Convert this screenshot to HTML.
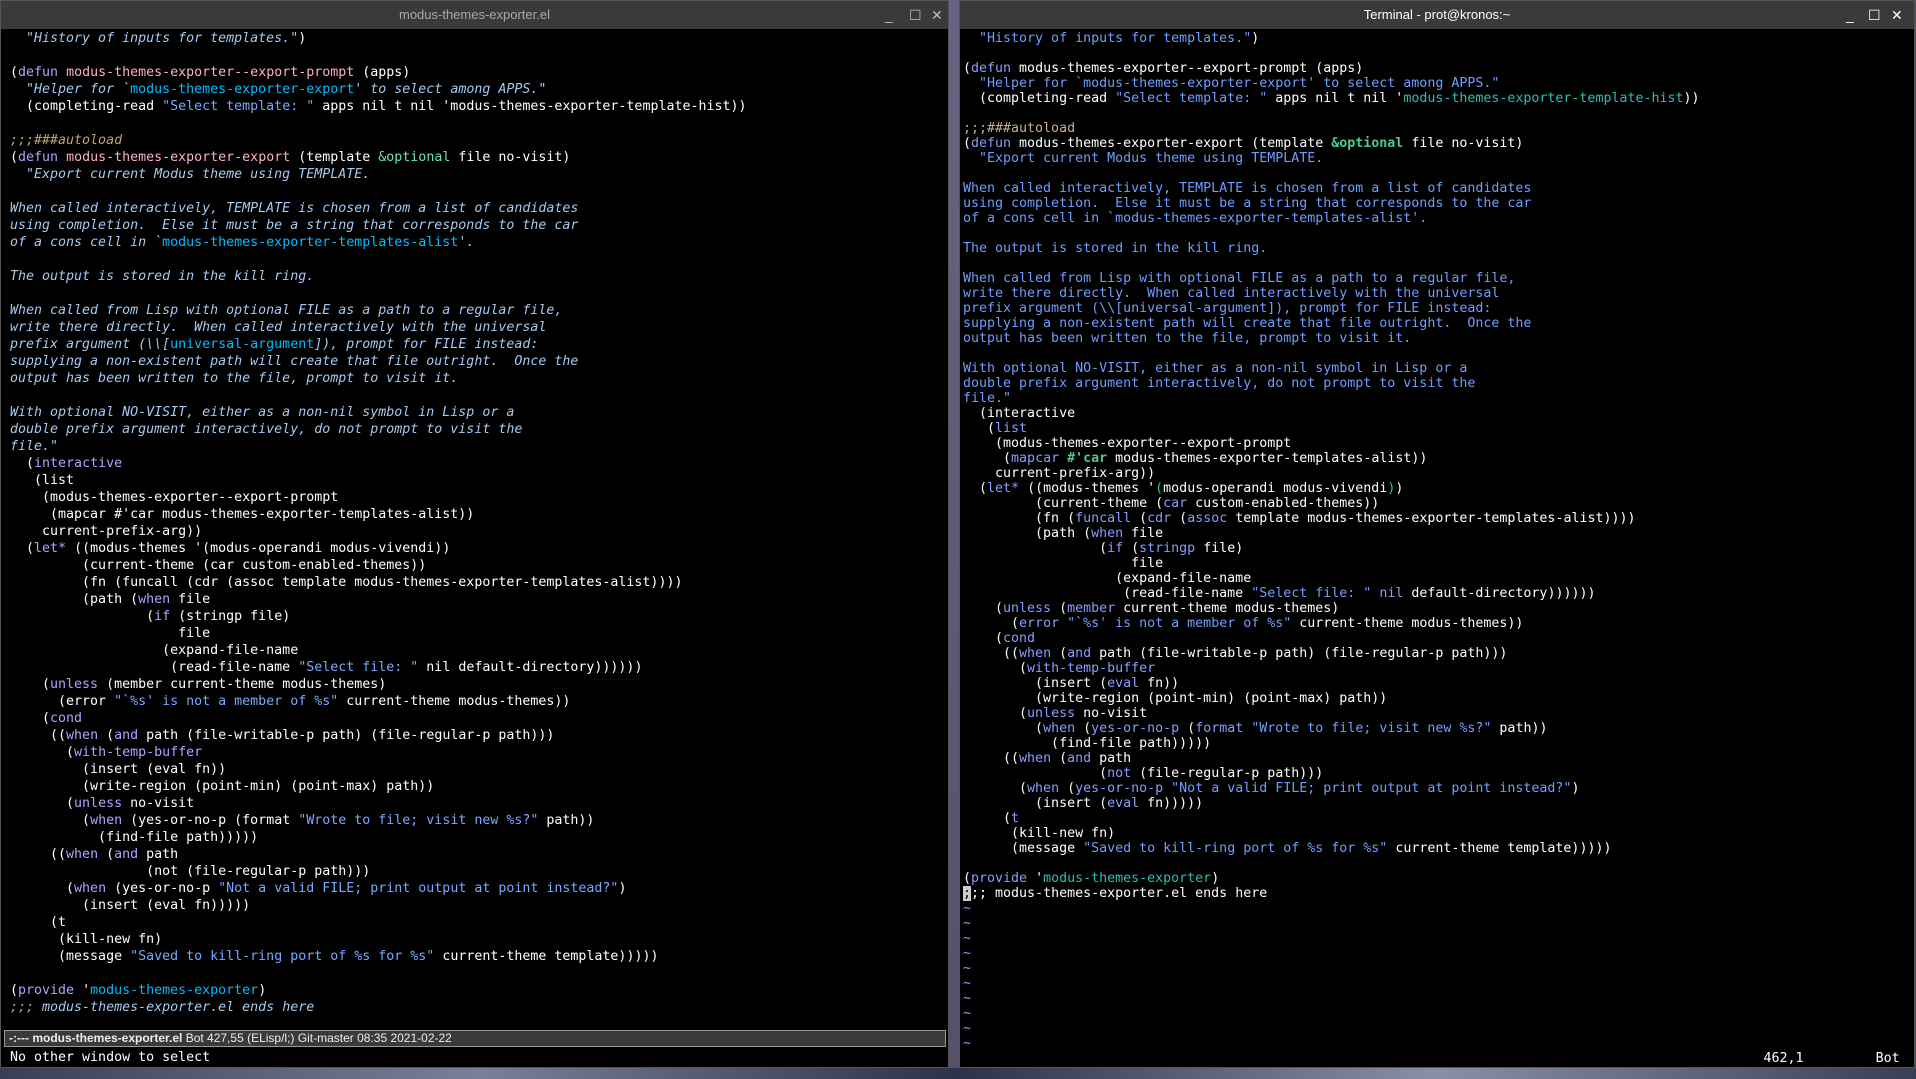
<!DOCTYPE html>
<html><head><meta charset="utf-8"><style>
*{margin:0;padding:0;box-sizing:border-box}
body{width:1916px;height:1079px;overflow:hidden;background:#4a4e66;position:relative;font-family:"DejaVu Sans Mono","Liberation Mono",monospace}
.win{position:absolute;background:#000;border:1px solid #555}
.tb{position:absolute;left:0;right:0;top:0;height:28px;background:#3a3a3a;font-family:"Liberation Sans",sans-serif;font-size:13px;line-height:28px;text-align:center}
.btn{position:absolute;top:0;font-size:14px;color:#bbb;line-height:28px}
pre{position:absolute;font-family:"DejaVu Sans Mono",monospace;font-size:13.3px;white-space:pre}
#L{left:10px;top:30px;line-height:17px;color:#ffffff}
#R{left:963px;top:31px;line-height:15px;color:#ffffff}
#L .k{color:#b6a0ff}#L .f{color:#feacd0}#L .s{color:#79a8ff}#L .d{color:#a6c9ef;font-style:italic}#L .c{color:#00bcff}#L .o{color:#6ae4b9}#L .m{color:#c0a56e;font-style:italic}
#R .k{color:#8a9cff}#R .s{color:#6f9dff}#R .d{color:#6f9dff}#R .q{color:#2fbcb0}#R .g{color:#4ec98f;font-weight:bold}#R .m{color:#c8b08a}
.ml{position:absolute;left:4px;top:1030px;width:942px;height:17px;background:#3a3a3a;border:1px solid #999;color:#eee;font-family:"Liberation Sans",sans-serif;font-size:12px;line-height:15px;padding-left:4px}
</style></head><body>
<div style="position:absolute;left:948px;top:0;width:12px;height:1079px;background:linear-gradient(#6a6282,#55506a)"></div>
<div style="position:absolute;left:0;top:1068px;width:1916px;height:11px;background:linear-gradient(90deg,#3a3e55,#7a7f99,#2e3248,#8a8fa8,#3a3e55)"></div>
<div class="win" style="left:0;top:0;width:949px;height:1068px">
<div class="tb" style="color:#a8a8a8">modus-themes-exporter.el
<span class="btn" style="left:884px">_</span><span class="btn" style="left:908px">☐</span><span class="btn" style="left:930px">✕</span></div>
</div>
<div class="win" style="left:959px;top:0;width:956px;height:1068px">
<div class="tb" style="color:#fff">Terminal - prot@kronos:~
<span class="btn" style="left:886px;color:#fff">_</span><span class="btn" style="left:908px;color:#fff">☐</span><span class="btn" style="left:931px;color:#fff">✕</span></div>
</div>
<pre id="L"><span class="d">  "History of inputs for templates."</span>)

(<span class="k">defun</span> <span class="f">modus-themes-exporter--export-prompt</span> (apps)
<span class="d">  "Helper for `</span><span class="c">modus-themes-exporter-export</span><span class="d">' to select among APPS."</span>
  (completing-read <span class="s">"Select template: "</span> apps nil t nil 'modus-themes-exporter-template-hist))

<span class="m">;;;###autoload</span>
(<span class="k">defun</span> <span class="f">modus-themes-exporter-export</span> (template <span class="o">&amp;optional</span> file no-visit)
<span class="d">  "Export current Modus theme using TEMPLATE.

When called interactively, TEMPLATE is chosen from a list of candidates
using completion.  Else it must be a string that corresponds to the car
of a cons cell in `</span><span class="c">modus-themes-exporter-templates-alist</span><span class="d">'.

The output is stored in the kill ring.

When called from Lisp with optional FILE as a path to a regular file,
write there directly.  When called interactively with the universal
prefix argument (\\[</span><span class="c">universal-argument</span><span class="d">]), prompt for FILE instead:
supplying a non-existent path will create that file outright.  Once the
output has been written to the file, prompt to visit it.

With optional NO-VISIT, either as a non-nil symbol in Lisp or a
double prefix argument interactively, do not prompt to visit the
file."</span>
  (<span class="k">interactive</span>
   (list
    (modus-themes-exporter--export-prompt
     (mapcar #'car modus-themes-exporter-templates-alist))
    current-prefix-arg))
  (<span class="k">let*</span> ((modus-themes '(modus-operandi modus-vivendi))
         (current-theme (car custom-enabled-themes))
         (fn (funcall (cdr (assoc template modus-themes-exporter-templates-alist))))
         (path (<span class="k">when</span> file
                 (<span class="k">if</span> (stringp file)
                     file
                   (expand-file-name
                    (read-file-name <span class="s">"Select file: "</span> nil default-directory))))))
    (<span class="k">unless</span> (member current-theme modus-themes)
      (error <span class="s">"`%s' is not a member of %s"</span> current-theme modus-themes))
    (<span class="k">cond</span>
     ((<span class="k">when</span> (<span class="k">and</span> path (file-writable-p path) (file-regular-p path)))
       (<span class="k">with-temp-buffer</span>
         (insert (eval fn))
         (write-region (point-min) (point-max) path))
       (<span class="k">unless</span> no-visit
         (<span class="k">when</span> (yes-or-no-p (format <span class="s">"Wrote to file; visit new %s?"</span> path))
           (find-file path)))))
     ((<span class="k">when</span> (<span class="k">and</span> path
                 (not (file-regular-p path)))
       (<span class="k">when</span> (yes-or-no-p <span class="s">"Not a valid FILE; print output at point instead?"</span>)
         (insert (eval fn)))))
     (t
      (kill-new fn)
      (message <span class="s">"Saved to kill-ring port of %s for %s"</span> current-theme template)))))

(<span class="k">provide</span> '<span class="c">modus-themes-exporter</span>)
<span class="m">;;; </span><span class="d">modus-themes-exporter.el ends here</span></pre>
<pre id="R"><span class="d">  "History of inputs for templates."</span>)

(<span class="k">defun</span> modus-themes-exporter--export-prompt (apps)
<span class="d">  "Helper for `modus-themes-exporter-export' to select among APPS."</span>
  (completing-read <span class="s">"Select template: "</span> apps nil t nil '<span class="q">modus-themes-exporter-template-hist</span>))

<span class="m">;;;###autoload</span>
(<span class="k">defun</span> modus-themes-exporter-export (template <span class="g">&amp;optional</span> file no-visit)
<span class="d">  "Export current Modus theme using TEMPLATE.

When called interactively, TEMPLATE is chosen from a list of candidates
using completion.  Else it must be a string that corresponds to the car
of a cons cell in `modus-themes-exporter-templates-alist'.

The output is stored in the kill ring.

When called from Lisp with optional FILE as a path to a regular file,
write there directly.  When called interactively with the universal
prefix argument (\\[universal-argument]), prompt for FILE instead:
supplying a non-existent path will create that file outright.  Once the
output has been written to the file, prompt to visit it.

With optional NO-VISIT, either as a non-nil symbol in Lisp or a
double prefix argument interactively, do not prompt to visit the
file."</span>
  (interactive
   (<span class="k">list</span>
    (modus-themes-exporter--export-prompt
     (<span class="k">mapcar</span> <span class="g">#'car</span> modus-themes-exporter-templates-alist))
    current-prefix-arg))
  (<span class="k">let*</span> ((modus-themes '<span class="q">(</span>modus-operandi modus-vivendi<span class="q">)</span>)
         (current-theme (<span class="k">car</span> custom-enabled-themes))
         (fn (<span class="k">funcall</span> (<span class="k">cdr</span> (<span class="k">assoc</span> template modus-themes-exporter-templates-alist))))
         (path (<span class="k">when</span> file
                 (<span class="k">if</span> (<span class="k">stringp</span> file)
                     file
                   (expand-file-name
                    (read-file-name <span class="s">"Select file: "</span> <span class="k">nil</span> default-directory))))))
    (<span class="k">unless</span> (<span class="k">member</span> current-theme modus-themes)
      (<span class="k">error</span> <span class="s">"`%s' is not a member of %s"</span> current-theme modus-themes))
    (<span class="k">cond</span>
     ((<span class="k">when</span> (<span class="k">and</span> path (file-writable-p path) (file-regular-p path)))
       (<span class="k">with-temp-buffer</span>
         (insert (<span class="k">eval</span> fn))
         (write-region (point-min) (point-max) path))
       (<span class="k">unless</span> no-visit
         (<span class="k">when</span> (<span class="k">yes-or-no-p</span> (<span class="k">format</span> <span class="s">"Wrote to file; visit new %s?"</span> path))
           (find-file path)))))
     ((<span class="k">when</span> (<span class="k">and</span> path
                 (<span class="k">not</span> (file-regular-p path)))
       (<span class="k">when</span> (<span class="k">yes-or-no-p</span> <span class="s">"Not a valid FILE; print output at point instead?"</span>)
         (insert (<span class="k">eval</span> fn)))))
     (<span class="k">t</span>
      (kill-new fn)
      (message <span class="s">"Saved to kill-ring port of %s for %s"</span> current-theme template)))))

(<span class="k">provide</span> '<span class="q">modus-themes-exporter</span>)
<span style="background:#ccc;color:#000">;</span>;; modus-themes-exporter.el ends here
<span class="k">~</span>
<span class="k">~</span>
<span class="k">~</span>
<span class="k">~</span>
<span class="k">~</span>
<span class="k">~</span>
<span class="k">~</span>
<span class="k">~</span>
<span class="k">~</span>
<span class="k">~</span>
                                                                                                    462,1         Bot</pre>
<div class="ml"><b>-:---  modus-themes-exporter.el</b>  Bot 427,55  (ELisp/l;)  Git-master 08:35 2021-02-22</div>
<pre style="left:10px;top:1049px;line-height:17px;color:#fff">No other window to select</pre>
</body></html>
